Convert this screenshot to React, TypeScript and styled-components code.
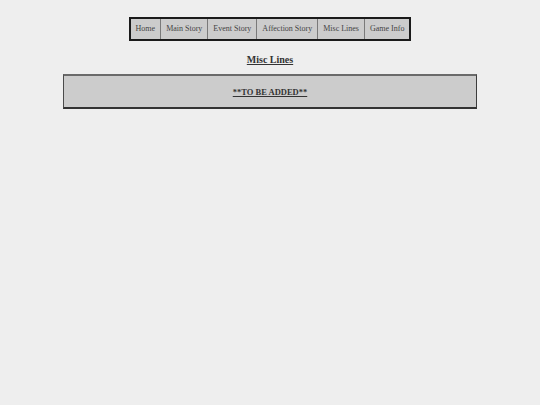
import React from "react";
import styled, { createGlobalStyle } from "styled-components";

const GlobalStyle = createGlobalStyle`
  html, body {
    margin: 0;
    padding: 0;
    background: #eeeeee;
  }
  body {
    min-height: 405px;
    font-family: "Liberation Serif", "Times New Roman", serif;
    color: #333333;
  }
`;

const Page = styled.div`
  display: flex;
  flex-direction: column;
  align-items: center;
  padding-top: 17px;
`;

const NavBar = styled.nav`
  display: flex;
  border: 2px solid #1a1a1a;
  background: #cccccc;
`;

const NavItem = styled.a<{ $first?: boolean }>`
  display: block;
  padding: 5px 5px 6px;
  font-size: 8px;
  line-height: 9px;
  color: #444444;
  text-decoration: none;
  border-left: ${(p) => (p.$first ? "none" : "1px solid #7a7a7a")};
  white-space: nowrap;
`;

const Title = styled.h2`
  margin: 12px 0 0;
  font-size: 10px;
  line-height: 13px;
  font-weight: bold;
  text-decoration: underline;
  color: #333333;
`;

const Panel = styled.section`
  box-sizing: border-box;
  width: 414px;
  height: 35px;
  margin-top: 8px;
  display: flex;
  align-items: center;
  justify-content: center;
  background: #cccccc;
  border-style: solid;
  border-width: 2px 1.5px 2px 1.5px;
  border-color: #6a6a6a #3c3c3c #333333 #4a4a4a;
`;

const Notice = styled.p`
  margin: 0;
  font-size: 8.5px;
  font-weight: bold;
  text-decoration: underline;
  color: #333333;
`;

const links = [
  "Home",
  "Main Story",
  "Event Story",
  "Affection Story",
  "Misc Lines",
  "Game Info",
];

export default function App() {
  return (
    <>
      <GlobalStyle />
      <Page>
        <NavBar>
          {links.map((l, i) => (
            <NavItem key={l} href="#" $first={i === 0}>
              {l}
            </NavItem>
          ))}
        </NavBar>
        <Title>Misc Lines</Title>
        <Panel>
          <Notice>**TO BE ADDED**</Notice>
        </Panel>
      </Page>
    </>
  );
}
